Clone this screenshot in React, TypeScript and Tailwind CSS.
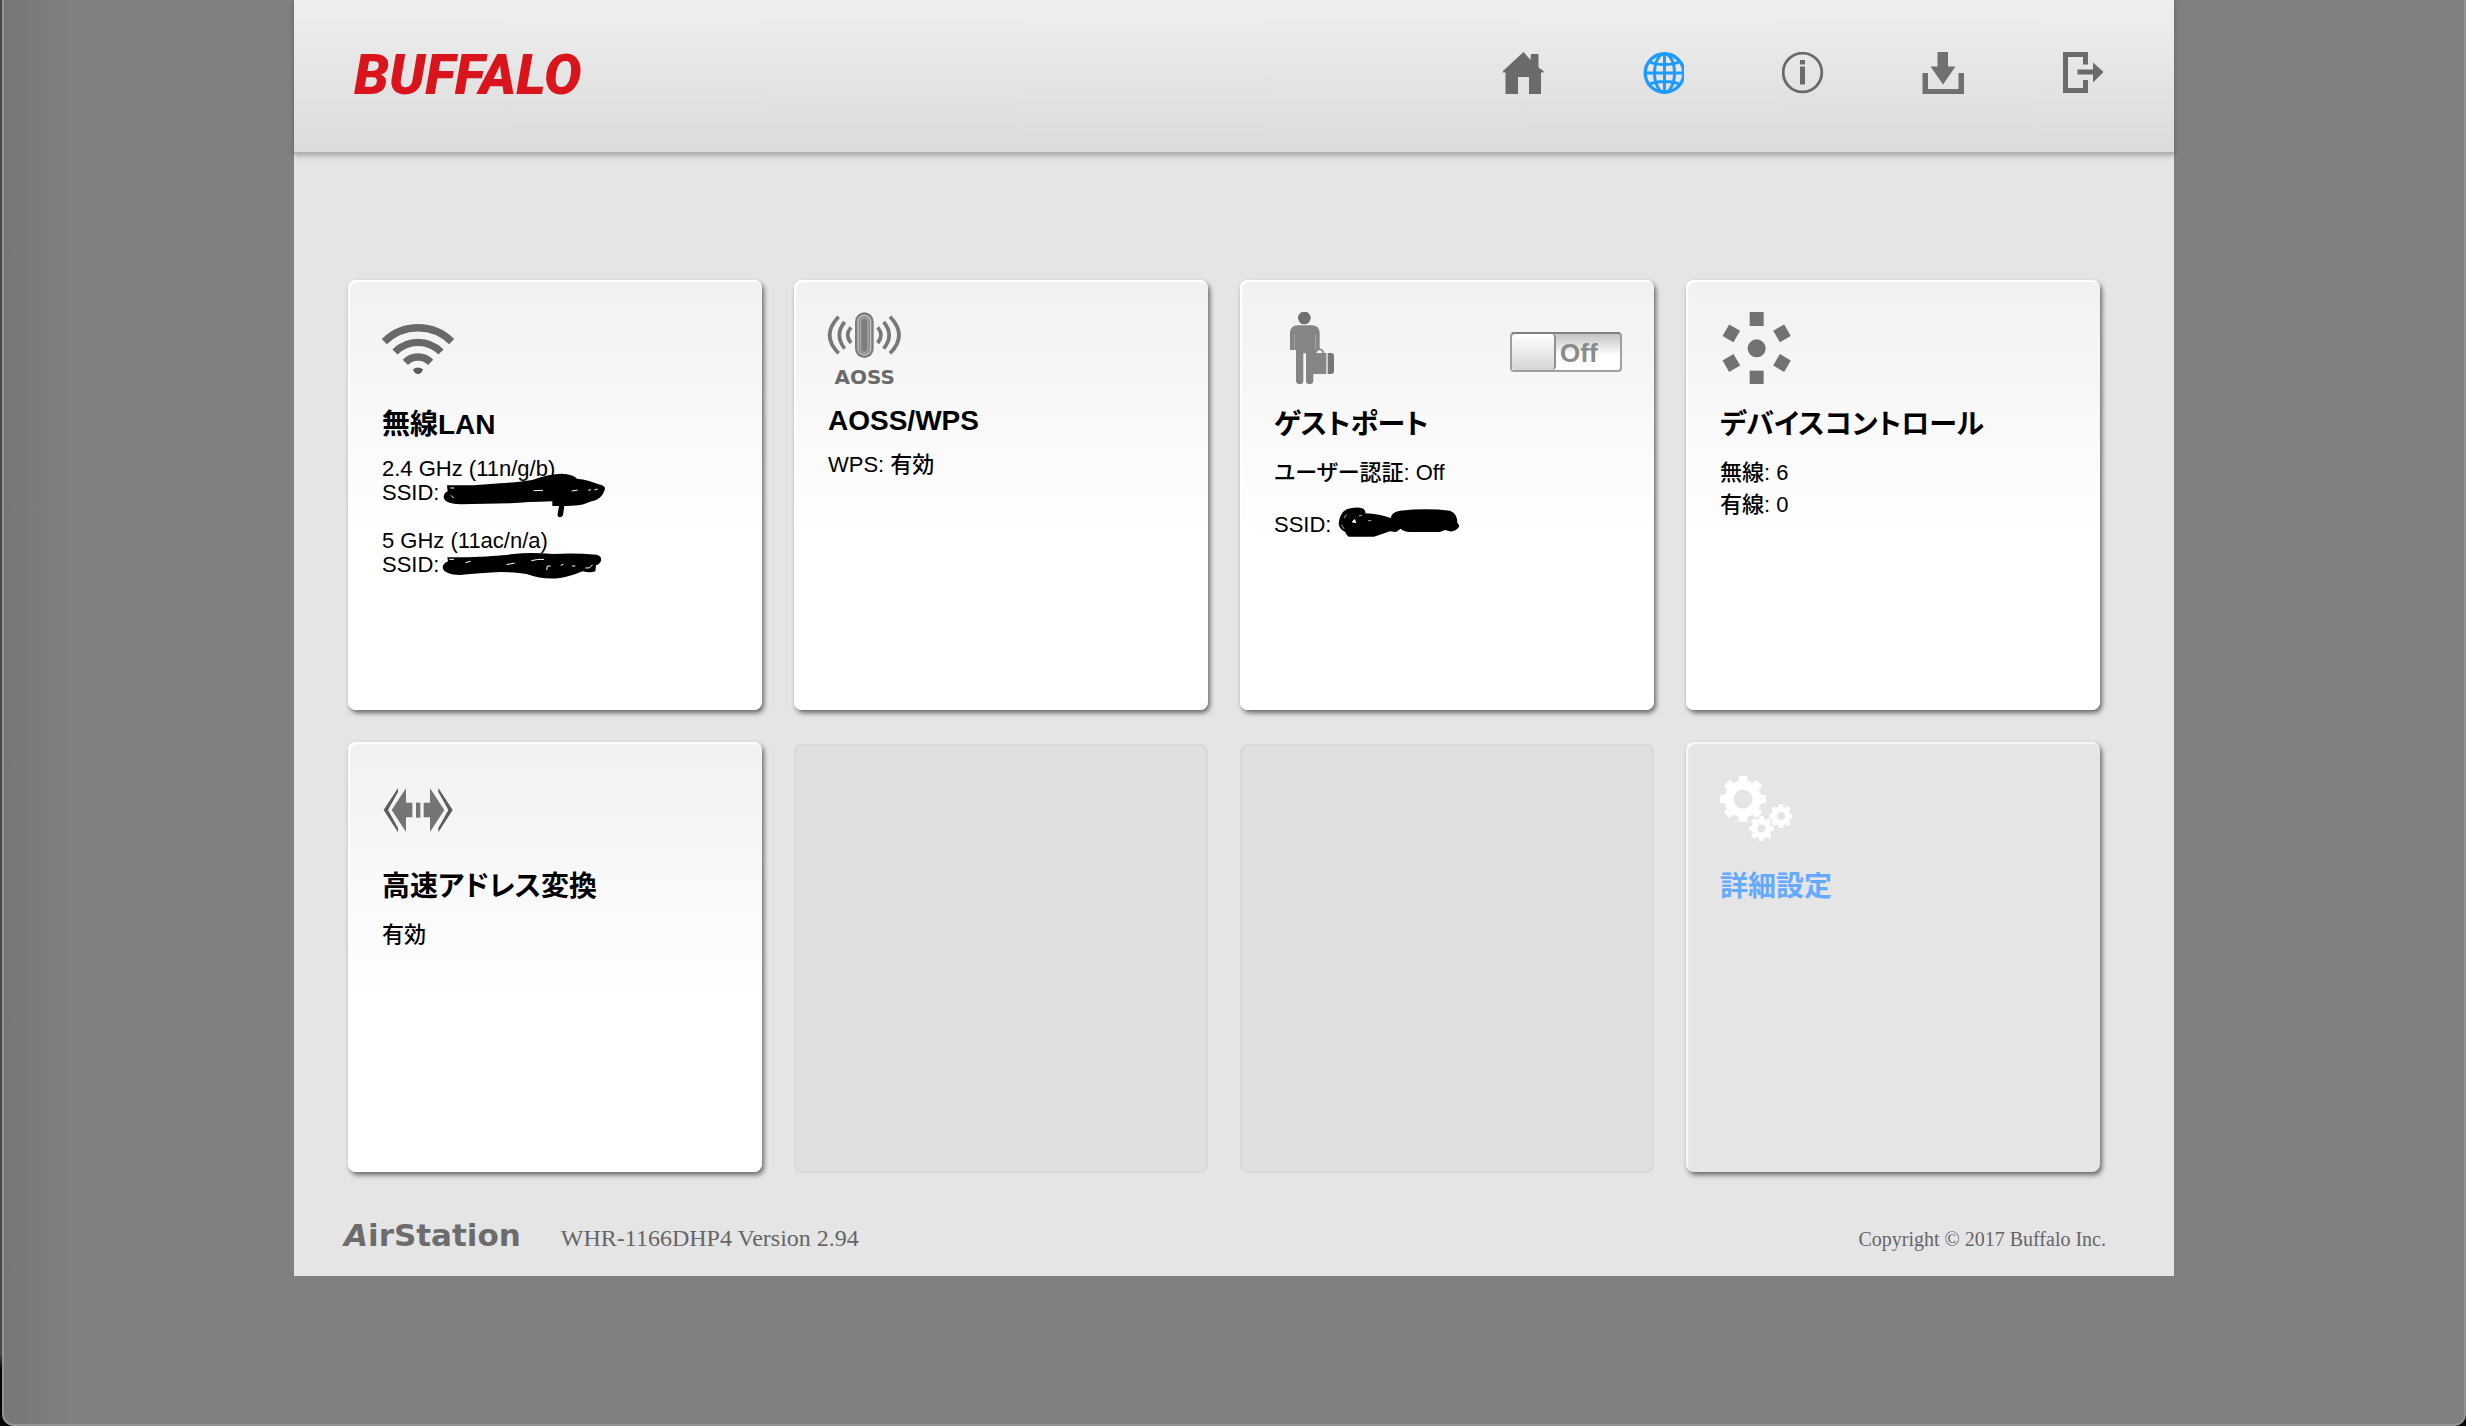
import { useState, type ReactNode } from "react";

const ICON_GRAY = "#6a6a6a";

/* ---------- header icons (42 x 42) ---------- */

function HomeIcon() {
  return (
    <svg viewBox="0 0 42 42" className="size-[42px]" fill={ICON_GRAY}>
      <path d="M21.5 0 28.5 8 29 2h7.5v13.500L41.500 19v1.500H39V42H27V25H16v17H3.500V20.500H1V19Z" />
    </svg>
  );
}

function GlobeIcon() {
  return (
    <svg viewBox="0 0 42 42" className="size-[42px]" fill="none" stroke="#1e9bff" strokeWidth="3">
      <circle cx="22.500" cy="21" r="19.300" strokeWidth="3.400" />
      <ellipse cx="22.500" cy="21" rx="10" ry="19.300" />
      <path d="M22.500 1v40M3 21h39M7 9.500c8 4 23 4 31 0M7 32.500c8-4 23-4 31 0" />
    </svg>
  );
}

function InfoIcon() {
  return (
    <svg viewBox="0 0 42 42" className="size-[42px]" fill={ICON_GRAY}>
      <circle cx="20.500" cy="20.500" r="19.300" fill="none" stroke={ICON_GRAY} strokeWidth="2.800" />
      <rect x="18" y="8" width="5" height="4.500" />
      <rect x="18" y="14.500" width="5" height="18" />
    </svg>
  );
}

function DownloadIcon() {
  return (
    <svg viewBox="0 0 42 42" className="size-[42px]" fill="#707070">
      <path d="M15.500 0H26v14.500h7.500L21 32.500 8.500 14.500h7Z" />
      <path d="M.5 21h5.500v16h30.500V21H42v21H.5Z" />
    </svg>
  );
}

function LogoutIcon() {
  return (
    <svg viewBox="0 0 42 42" className="size-[42px]" fill={ICON_GRAY}>
      <path d="M1 0h25v12.500h-5V5H6v31h15v-8h5v13H1Z" />
      <path d="M15.500 17.500H31V10.500L41.500 20 31 30.500v-8H15.500Z" />
    </svg>
  );
}

/* ---------- card icons (72 x 72) ---------- */

function WifiIcon() {
  return (
    <svg viewBox="126 126 216 216" className="size-[72px]" fill="none" stroke="#686868" strokeWidth="22">
      <path d="M133 215A143 143 0 0 1 335 215" />
      <path d="M165 246A97 97 0 0 1 303 246" />
      <path d="M196 277A53 53 0 0 1 272 277" />
      <path d="M219 298q15-11 30 0-4 14-15 14t-15-14Z" fill="#5a5a5a" stroke="none" />
    </svg>
  );
}

function AossIcon() {
  return (
    <svg viewBox="144 126 216 216" className="size-[72px] overflow-visible" fill="none">
      <g stroke="#777" strokeWidth="11">
        <path d="M176 140Q122 195 176 250" />
        <path d="M194 156Q162 195 194 236" />
        <path d="M213 172Q193 195 213 219" />
        <path d="M330 140Q384 195 330 250" />
        <path d="M311 156Q344 195 311 236" />
        <path d="M293 172Q313 195 293 219" />
      </g>
      <rect x="225" y="127" width="56" height="137" rx="28" fill="#7c7c7c" />
      <rect x="234" y="136" width="38" height="119" rx="19" fill="#8a8a8a" stroke="#c4c4c4" strokeWidth="4" />
      <rect x="242" y="144" width="22" height="103" rx="10" fill="#7d7d7d" stroke="#b2b2b2" strokeWidth="3" />
      <text x="254" y="341" textAnchor="middle" fill="#6a6a6a" fontSize="60" fontWeight="700" fontFamily="DejaVu Sans, sans-serif">
        AOSS
      </text>
    </svg>
  );
}

function GuestIcon() {
  return (
    <svg viewBox="132 126 216 216" className="size-[72px]" fill="#858585">
      <circle cx="223" cy="144" r="19" fill="#707070" />
      <path d="M204 166H245Q269 166 269 190V236L257 246 250 262V332Q250 342 239 342T228 332V250H220V332Q220 342 209 342T198 332V240H180V190Q180 166 204 166Z" />
      <path d="M193 194V240M257 194V240" stroke="#a8a8a8" strokeWidth="3" />
      <path d="M257 250Q258 238 268 238T281 250" fill="none" stroke="#858585" strokeWidth="5" />
      <rect x="246" y="249" width="43" height="63" />
      <path d="M293 249H304Q312 249 312 258V303Q312 312 304 312H293Z" fill="#777" />
    </svg>
  );
}

function DevicesIcon() {
  return (
    <svg viewBox="150 126 216 216" className="size-[72px]" fill="#727272">
      <circle cx="260" cy="235" r="27" />
      <rect x="239" y="126" width="42" height="42" />
      <rect x="239" y="302" width="42" height="40" />
      <rect x="165" y="170" width="38" height="40" transform="rotate(30 184 190)" />
      <rect x="317" y="170" width="38" height="40" transform="rotate(-30 336 190)" />
      <rect x="165" y="259" width="38" height="40" transform="rotate(-30 184 279)" />
      <rect x="317" y="259" width="38" height="40" transform="rotate(30 336 279)" />
    </svg>
  );
}

function TranslateIcon() {
  return (
    <svg viewBox="126 252 216 216" className="size-[72px]" fill="#747474">
      <path d="M174 294V306L144 360 174 414V427L131 360Z" fill="#5c5c5c" />
      <path d="M295 294V306L325 360 295 414V427L338 360Z" fill="#5c5c5c" />
      <path d="M198 295V338H217V382H198V426L155 360Z" />
      <path d="M270 295V338H251V382H270V426L313 360Z" />
      <rect x="228" y="338" width="13" height="45" />
    </svg>
  );
}

const TEETH = [0, 45, 90, 135, 180, 225, 270, 315];

function Gear({ cx, cy, outer, hole }: { cx: number; cy: number; outer: number; hole: number }) {
  const body = outer * 0.8;
  const tooth = outer * 0.38;
  return (
    <g>
      <circle cx={cx} cy={cy} r={(body + hole) / 2} fill="none" stroke="white" strokeWidth={body - hole} />
      {TEETH.map((deg) => (
        <rect
          key={deg}
          x={cx - tooth / 2}
          y={cy - outer}
          width={tooth}
          height={outer * 0.4}
          rx={outer * 0.08}
          fill="white"
          transform={`rotate(${deg} ${cx} ${cy})`}
        />
      ))}
    </g>
  );
}

function GearsIcon() {
  return (
    <svg viewBox="0 0 72 72" className="size-[72px]">
      <Gear cx={23} cy={25} outer={23} hole={9.5} />
      <Gear cx={41.5} cy={54.5} outer={12.5} hole={4} />
      <Gear cx={61} cy={42} outer={12} hole={4} />
    </svg>
  );
}

/* ---------- blacked out network names ---------- */

function Scribble24() {
  return (
    <span className="relative inline-block h-6 align-top">
      <svg viewBox="308 606 492 138" className="absolute -left-[3px] -top-[9px] h-[46px] w-[164px] max-w-none overflow-visible">
        <path d="M320 646H400L480 640Q540 636 575 630 640 608 675 612 700 616 710 626 745 630 775 643 800 648 792 662 786 680 768 690 750 694 738 700 720 708 672 708L668 736Q665 742 658 742 650 740 652 732L656 708H636V694Q560 696 510 700L360 703Q316 702 310 684 310 668 322 664Z" />
        <path d="M332 676l8 8M580 662l28-1M694 663l18-3M744 661l8-2M762 660l10-3" stroke="white" strokeWidth="3" />
        <path d="M330 654h12" stroke="white" strokeWidth="3" />
      </svg>
    </span>
  );
}

function Scribble5() {
  return (
    <span className="relative inline-block h-6 align-top">
      <svg viewBox="309 846 486 84" className="absolute -left-[3px] -top-px h-7 w-[162px] max-w-none overflow-visible">
        <path d="M322 862H380Q480 858 520 852 570 846 640 852 700 848 770 854 786 858 783 872 780 882 768 886L766 904Q750 910 728 904 690 920 660 924 610 930 560 912 530 906 480 906 400 910 360 915 314 914 308 894 308 880 324 874Z" />
        <path d="M328 868h14M376 878l16-4M500 884l24-5M574 872q18-5 38-4M620 900l2-12h10M662 886l8-3M696 888h10M736 894q14 4 22-10" fill="none" stroke="white" strokeWidth="3" />
      </svg>
    </span>
  );
}

function ScribbleGuest() {
  return (
    <span className="relative inline-block h-6 align-top">
      <svg viewBox="324 708 366 96" className="absolute left-0 -top-[7px] h-8 w-[122px] max-w-none overflow-visible">
        <path d="M350 718Q380 708 400 716 408 722 406 730 450 732 482 744 484 726 510 722 590 714 660 722 682 730 682 758 690 766 686 772 676 786 660 784L645 780 630 786H540Q520 784 512 776L498 786 480 784 432 800H356Q346 794 346 786 330 780 326 762 328 730 350 718Z" />
        <path d="M366 756l8-8 4 10zM342 744l8-10M386 738l10-2M414 752h10M342 776l-8-12" fill="white" stroke="white" strokeWidth="2" />
      </svg>
    </span>
  );
}

/* ---------- cards ---------- */

interface CardProps {
  icon: ReactNode;
  title: string;
  latinTitle?: boolean;
  action?: ReactNode;
  children?: ReactNode;
}

function Card({ icon, title, latinTitle, action, children }: CardProps) {
  return (
    <section className="h-[430px] rounded-lg bg-linear-to-b from-[#f1f1f1] to-white to-60% pt-8 pr-8 pl-[34px] shadow-[inset_2px_2px_1px_#fff,2px_3px_5px_rgba(0,0,0,0.55)]">
      <div className="flex h-[72px] items-start justify-between">
        {icon}
        {action}
      </div>
      <h2 className={`mt-[21px] text-[28px] font-bold ${latinTitle ? "leading-8" : "leading-10"}`}>{title}</h2>
      <div className="mt-3 text-[22px] font-medium">{children}</div>
    </section>
  );
}

function EmptyCard() {
  return <div className="mt-[2px] h-[429px] rounded-lg border-2 border-[#d8d8d8] bg-[#e0e0e0]" />;
}

function GuestSwitch() {
  const [on, setOn] = useState(false);
  return (
    <label
      className={`mt-5 flex h-10 w-28 cursor-pointer items-stretch overflow-hidden rounded-sm border-2 border-[#a0a0a0] border-t-[#808080] bg-linear-to-b from-[#c4c4c4] to-white to-60% ${on ? "flex-row-reverse" : ""}`}
    >
      <input
        type="checkbox"
        aria-label="ゲストポート"
        className="sr-only"
        checked={on}
        onChange={(e) => setOn(e.target.checked)}
      />
      <span className="w-11 rounded-sm border-r-2 border-[#909090] bg-linear-to-b from-white to-[#d6d6d6]" />
      <span className="flex-1 pl-1 text-[26px] leading-[38px] font-bold text-[#8a8a8a]">{on ? "On" : "Off"}</span>
    </label>
  );
}

const NAV_ITEMS = [
  { label: "ホーム", icon: <HomeIcon /> },
  { label: "インターネット", icon: <GlobeIcon /> },
  { label: "情報", icon: <InfoIcon /> },
  { label: "ダウンロード", icon: <DownloadIcon /> },
  { label: "ログアウト", icon: <LogoutIcon /> },
];

export default function App() {
  return (
    <div className="min-h-screen bg-linear-to-b from-[#484848] from-95% to-[#05060c] to-96% pl-[2px] font-['Liberation_Sans','Noto_Sans_CJK_JP',sans-serif] text-black [font-feature-settings:'palt']">
      <div className="min-h-screen rounded-b-xl border-2 border-t-0 border-[#949494] bg-[#808080] bg-linear-to-r from-[#777777] to-[#808080] to-[70px]">
        <div className="mx-auto max-w-[1880px] bg-[#e5e5e5]">
          {/* Header */}
          <header className="flex h-[154px] items-start justify-between border-b-2 border-[#b2b2b2] bg-linear-to-b from-[#efefef] to-[#dbdbdb] pr-[70px] pl-[60px] shadow-[0_2px_5px_rgba(0,0,0,0.25)]">
            <a
              href="#top"
              className="mt-[54px] font-[Roboto,sans-serif] text-[56px] leading-[42px] font-black text-[#d9141c] italic"
            >
              BUFFALO
            </a>
            <nav className="mt-[52px] flex gap-[98px]">
              {NAV_ITEMS.map((item) => (
                <a key={item.label} href="#top" aria-label={item.label}>
                  {item.icon}
                </a>
              ))}
            </nav>
          </header>

          {/* Cards */}
          <main className="grid grid-cols-4 gap-8 pt-[126px] pr-[74px] pl-[54px]">
            <Card icon={<WifiIcon />} title="無線LAN">
              <p className="leading-6">2.4 GHz (11n/g/b)</p>
              <p className="leading-6">
                SSID: <Scribble24 />
              </p>
              <p className="mt-6 leading-6">5 GHz (11ac/n/a)</p>
              <p className="leading-6">
                SSID: <Scribble5 />
              </p>
            </Card>

            <Card icon={<AossIcon />} title="AOSS/WPS" latinTitle>
              <p className="leading-8">WPS: 有効</p>
            </Card>

            <Card icon={<GuestIcon />} title="ゲストポート" action={<GuestSwitch />}>
              <p className="leading-8">ユーザー認証: Off</p>
              <p className="mt-6 leading-6">
                SSID: <ScribbleGuest />
              </p>
            </Card>

            <Card icon={<DevicesIcon />} title="デバイスコントロール">
              <p className="leading-8">無線: 6</p>
              <p className="leading-8">有線: 0</p>
            </Card>

            <Card icon={<TranslateIcon />} title="高速アドレス変換">
              <p className="leading-8">有効</p>
            </Card>

            <EmptyCard />
            <EmptyCard />

            {/* Advanced settings */}
            <section className="h-[430px] rounded-lg bg-[#e5e5e5] pt-8 pr-8 pl-[34px] shadow-[inset_2px_2px_1px_#f8f8f8,2px_3px_5px_rgba(0,0,0,0.55)]">
              <GearsIcon />
              <h2 className="mt-[21px] text-[28px] leading-10 font-bold text-[#66aaff]">
                <a href="#top">詳細設定</a>
              </h2>
            </section>
          </main>

          {/* Footer */}
          <footer className="flex items-baseline gap-10 pt-[46px] pr-[68px] pb-[21px] pl-[50px] font-['Liberation_Serif',serif] text-[#666]">
            <span className="font-['DejaVu_Sans',sans-serif] text-[31px] leading-8 font-bold text-[#6c6c6c]">
              <i>A</i>irStation
            </span>
            <span className="text-2xl leading-8">WHR-1166DHP4 Version 2.94</span>
            <span className="ml-auto text-xl leading-8">Copyright © 2017 Buffalo Inc.</span>
          </footer>
        </div>
      </div>
    </div>
  );
}
